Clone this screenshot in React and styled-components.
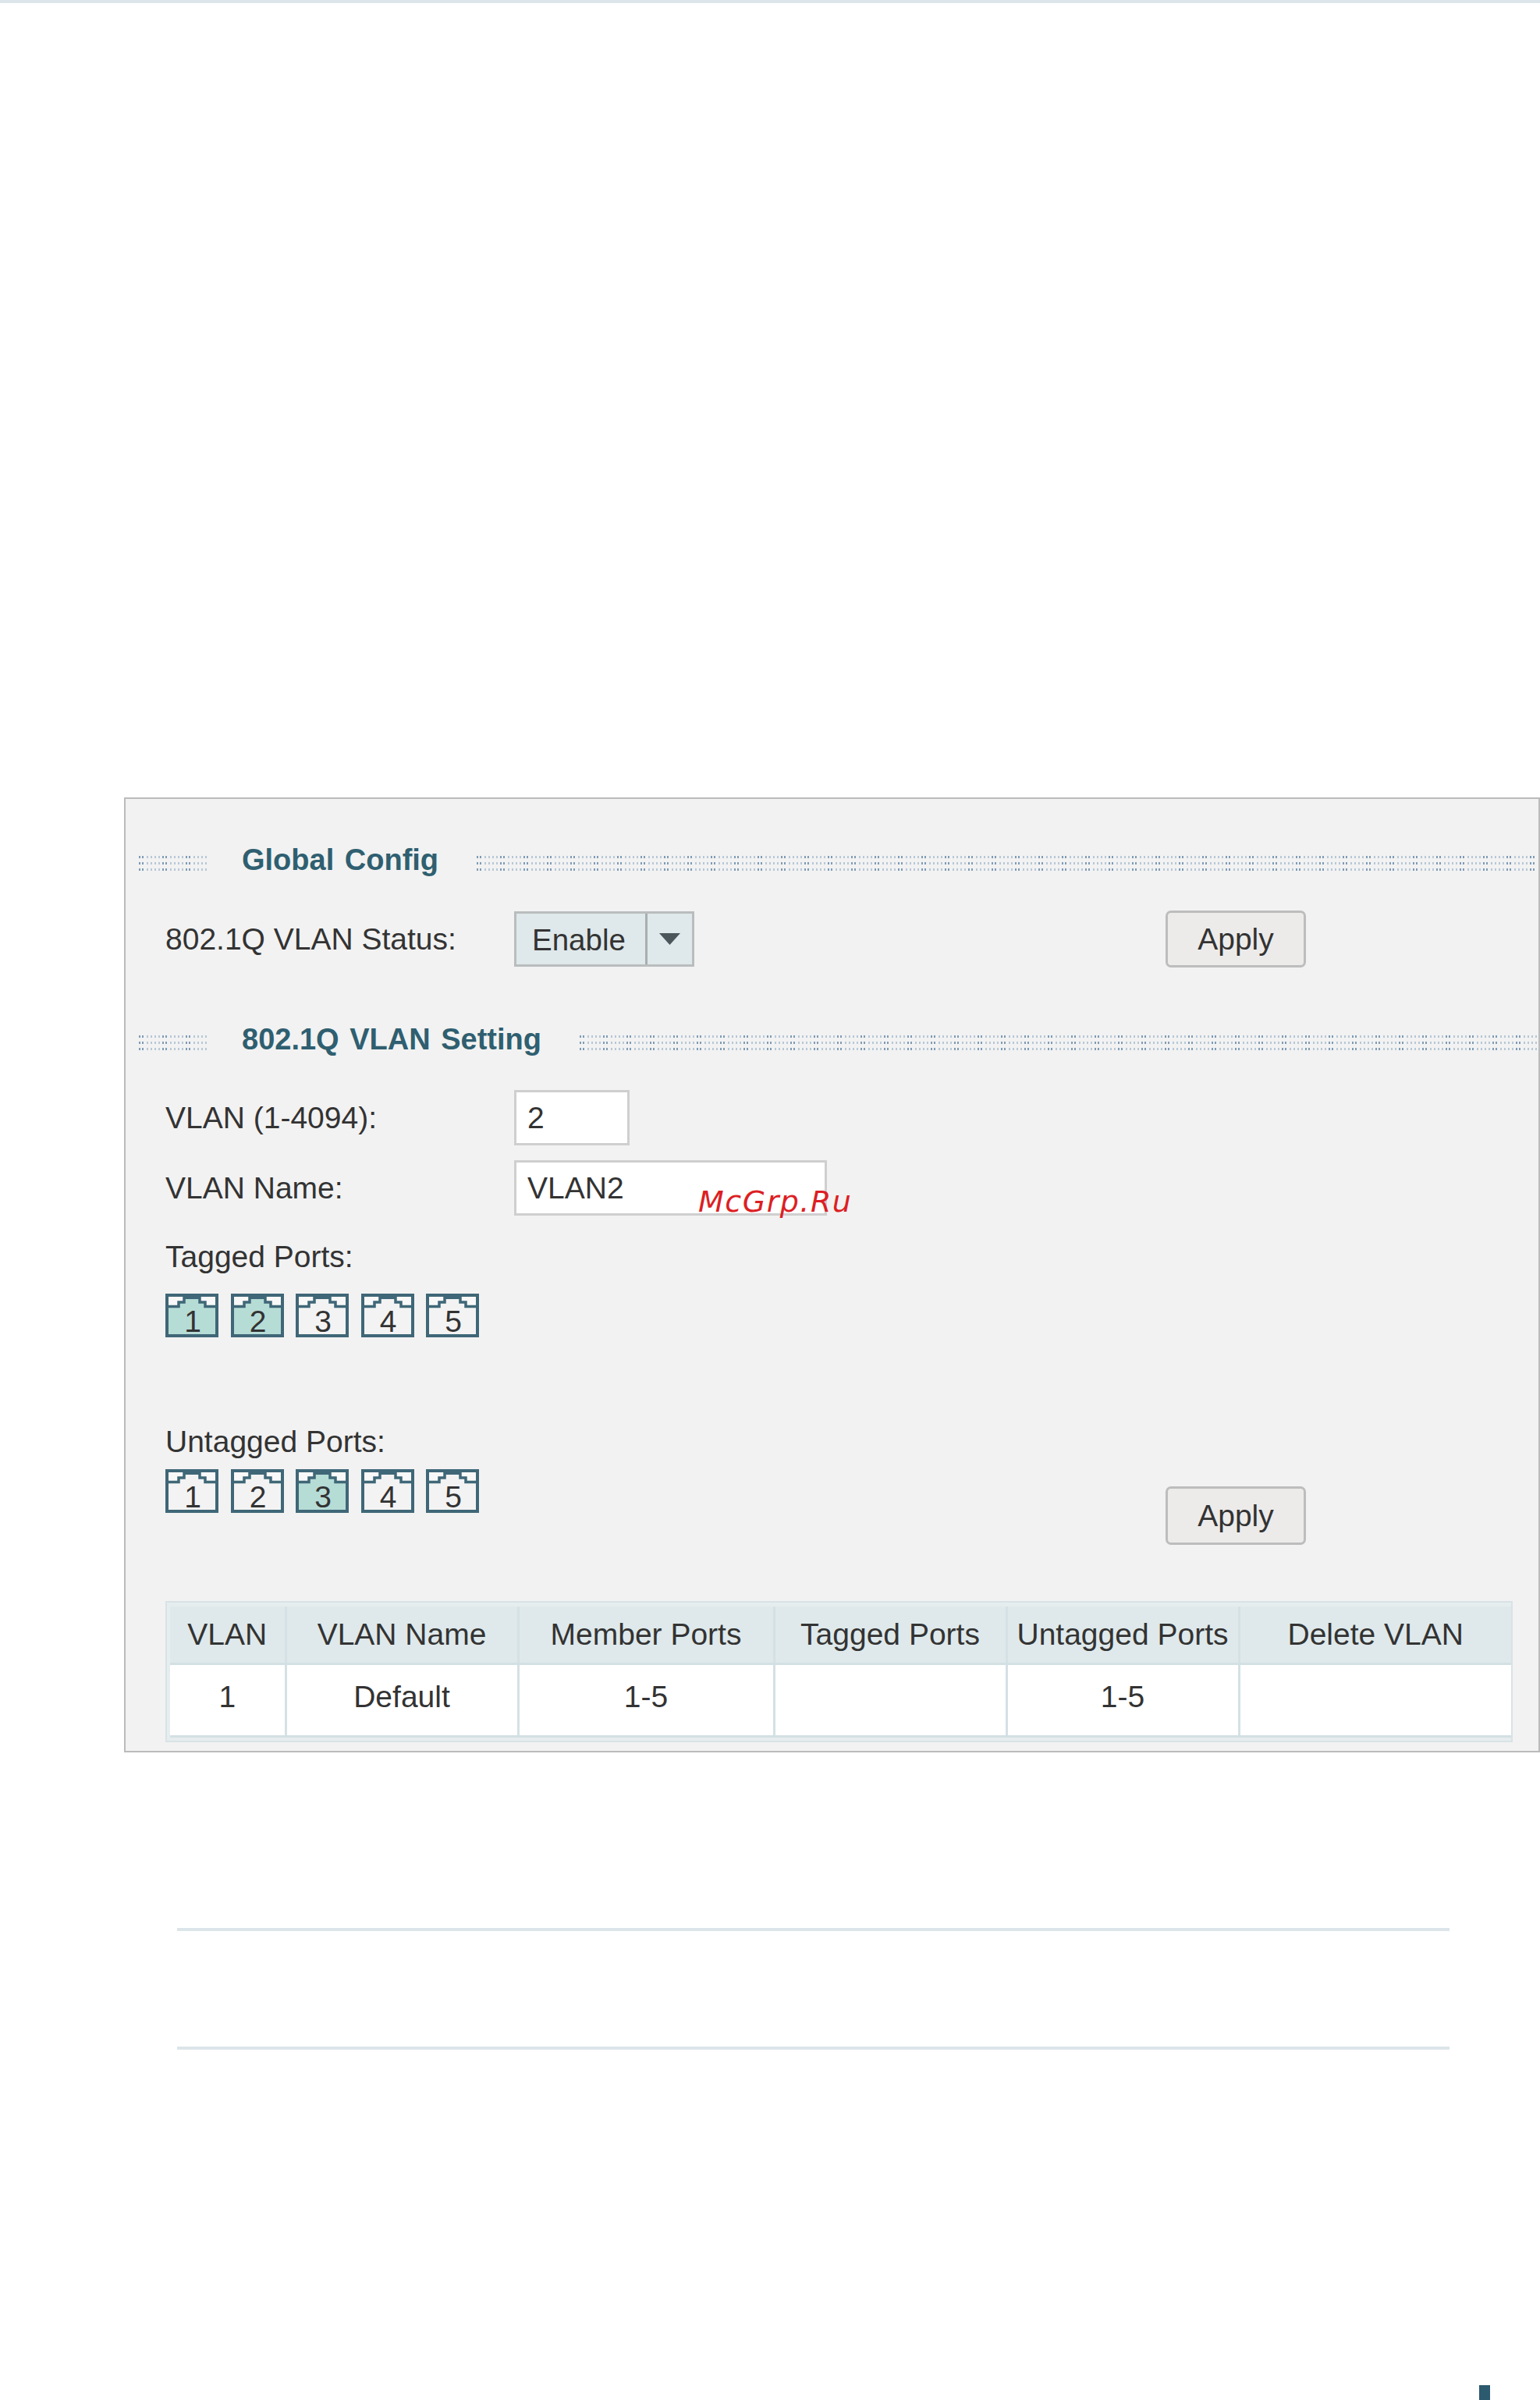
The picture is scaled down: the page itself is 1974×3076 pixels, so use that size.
import React from 'react';
import styled, { createGlobalStyle } from 'styled-components';

const GlobalStyle = createGlobalStyle`
  html, body {
    margin: 0;
    padding: 0;
    background: #fff;
    font-family: "Liberation Sans", Arial, sans-serif;
    color: #333;
  }
`;

const columns = [
  { title: 'VLAN', width: 148, value: '1' },
  { title: 'VLAN Name', width: 298, value: 'Default' },
  { title: 'Member Ports', width: 328, value: '1-5' },
  { title: 'Tagged Ports', width: 298, value: '' },
  { title: 'Untagged Ports', width: 298, value: '1-5' },
  { title: 'Delete VLAN', width: 349, value: '' },
];

const PortIcon = ({ number, selected }) => (
  <Port>
    <svg width="68" height="56" viewBox="0 0 68 56">
      <rect x="2" y="2" width="64" height="52" fill={selected ? '#b6dcd6' : '#f3f3f3'} stroke="#3f6777" strokeWidth="4" />
      <path d="M4 15V4H24V10H17V15ZM64 15V4H44V10H51V15Z" fill="#f8f8f8" />
      <path d="M2 16.5H17V11H24V5H44V11H51V16.5H66" fill="none" stroke="#3f6777" strokeWidth="3.5" />
      <rect x="24" y="2" width="20" height="5" fill="#3f6777" />
    </svg>
    <PortNumber>{number}</PortNumber>
  </Port>
);

const PortRow = ({ active }) => (
  <Ports>
    {[1, 2, 3, 4, 5].map(n => (
      <PortIcon key={n} number={n} selected={active.includes(n)} />
    ))}
  </Ports>
);

const SectionTitle = ({ children, first }) => (
  <TitleRow $first={first}>
    <Dots $width="88px" />
    <TitleText>{children}</TitleText>
    <Dots $grow />
  </TitleRow>
);

export default function App() {
  return (
    <Page>
      <GlobalStyle />
      <TopBar />
      <Panel>
        <SectionTitle first>Global Config</SectionTitle>
        <Body>
          <StatusRow>
            <Label>802.1Q VLAN Status:</Label>
            <Select>
              <SelectValue>Enable</SelectValue>
              <SelectArrow>
                <svg width="27" height="15" viewBox="0 0 27 15">
                  <path d="M0 0H27L13.5 15Z" fill="#4b565b" />
                </svg>
              </SelectArrow>
            </Select>
            <ApplyButton>Apply</ApplyButton>
          </StatusRow>
        </Body>

        <SectionTitle>802.1Q VLAN Setting</SectionTitle>
        <Body>
          <FieldRow>
            <Label>VLAN (1-4094):</Label>
            <TextInput $width="148px" defaultValue="2" readOnly />
          </FieldRow>
          <FieldRow $second>
            <Label>VLAN Name:</Label>
            <TextInput $width="401px" defaultValue="VLAN2" readOnly />
            <Watermark>McGrp.Ru</Watermark>
          </FieldRow>

          <TaggedLabel>Tagged Ports:</TaggedLabel>
          <TaggedPorts>
            <PortRow active={[1, 2]} />
          </TaggedPorts>

          <UntaggedRow>
            <UntaggedColumn>
              <Label>Untagged Ports:</Label>
              <UntaggedPorts>
                <PortRow active={[3]} />
              </UntaggedPorts>
            </UntaggedColumn>
            <LowerApply>Apply</LowerApply>
          </UntaggedRow>

          <TableFrame>
            <VlanTable>
              <colgroup>
                {columns.map(col => <col key={col.title} style={{ width: col.width }} />)}
              </colgroup>
              <thead>
                <tr>
                  {columns.map(col => <HeadCell key={col.title}>{col.title}</HeadCell>)}
                </tr>
              </thead>
              <tbody>
                <tr>
                  {columns.map(col => <BodyCell key={col.title}>{col.value}</BodyCell>)}
                </tr>
              </tbody>
            </VlanTable>
          </TableFrame>
        </Body>
      </Panel>
      <NoteBox />
      <Footer>
        <PageMark />
      </Footer>
    </Page>
  );
}

const Page = styled.div`
  width: 1974px;
  height: 3076px;
  display: flex;
  flex-direction: column;
  overflow: hidden;
`;

const TopBar = styled.div`
  height: 4px;
  background: #dce5ea;
`;

const Panel = styled.section`
  box-sizing: border-box;
  margin: 1018px 0 0 159px;
  height: 1224px;
  border: 2px solid #bbbbbb;
  background: #f2f2f2;
`;

const TitleRow = styled.div`
  display: flex;
  align-items: flex-start;
  height: 40px;
  margin: ${({ $first }) => ($first ? '56px' : '70px')} 2px 0 17px;
`;

const Dots = styled.div`
  flex: ${({ $grow }) => ($grow ? '1' : 'none')};
  width: ${({ $width }) => $width || 'auto'};
  height: 19px;
  margin-top: 17px;
  background-image:
    repeating-linear-gradient(90deg, #7f9cb6 0 2px, transparent 2px 4px, #7f9cb6 4px 6px, transparent 6px 10px,
      #b7c8d6 10px 12px, transparent 12px 15px, #b7c8d6 15px 17px, transparent 17px 20px,
      #b7c8d6 20px 22px, transparent 22px 25px, #b7c8d6 25px 27px, transparent 27px 30px);
  -webkit-mask-image: repeating-linear-gradient(180deg, #000 0 3px, transparent 3px 8px);
  mask-image: repeating-linear-gradient(180deg, #000 0 3px, transparent 3px 8px);
`;

const TitleText = styled.h2`
  margin: 2px 49px 0 44px;
  font-size: 38px;
  line-height: 40px;
  font-weight: bold;
  color: #2f5f70;
  white-space: pre;
  word-spacing: 3px;
`;

const Body = styled.div`
  padding-left: 51px;
`;

const Label = styled.div`
  font-size: 39px;
  line-height: 44px;
  color: #333;
  white-space: nowrap;
`;

const StatusRow = styled.div`
  display: flex;
  align-items: center;
  height: 73px;
  margin-top: 47px;

  ${Label} {
    width: 447px;
  }
`;

const Select = styled.div`
  box-sizing: border-box;
  display: flex;
  width: 231px;
  height: 71px;
  border: 3px solid #b9bdbd;
  background: #dfe8ea;
`;

const SelectValue = styled.div`
  box-sizing: border-box;
  width: 168px;
  padding-left: 20px;
  border-right: 3px solid #a9afaf;
  font-size: 38.5px;
  line-height: 67px;
`;

const SelectArrow = styled.div`
  flex: 1;
  display: flex;
  align-items: center;
  justify-content: center;
`;

const ApplyButton = styled.button`
  box-sizing: border-box;
  width: 180px;
  height: 73px;
  margin-left: 604px;
  padding: 0;
  border: 3px solid #bdbdbd;
  border-radius: 7px;
  background: #ecebea;
  font-family: inherit;
  font-size: 39px;
  color: #333;
`;

const LowerApply = styled(ApplyButton)`
  flex: none;
  height: 75px;
  margin: 79px 0 0;
`;

const FieldRow = styled.div`
  position: relative;
  display: flex;
  align-items: center;
  height: 71px;
  margin-top: ${({ $second }) => ($second ? '19px' : '47px')};

  ${Label} {
    width: 447px;
  }
`;

const TextInput = styled.input`
  box-sizing: border-box;
  width: ${({ $width }) => $width};
  height: 71px;
  padding: 0 0 0 14px;
  border: 3px solid #cfcfcf;
  border-radius: 0;
  outline: none;
  background: #fff;
  font-family: inherit;
  font-size: 39px;
  color: #333;
`;

const Watermark = styled.span`
  position: absolute;
  left: 683px;
  top: 31px;
  font-family: "DejaVu Sans", sans-serif;
  font-style: italic;
  font-size: 38px;
  line-height: 44px;
  letter-spacing: 1.5px;
  color: #dc1f24;
`;

const TaggedLabel = styled(Label)`
  margin-top: 31px;
`;

const TaggedPorts = styled.div`
  margin-top: 25px;
`;

const Ports = styled.div`
  display: flex;
  gap: 15.5px;
`;

const Port = styled.div`
  position: relative;
  flex: none;
  width: 68px;
  height: 56px;

  svg {
    display: block;
  }
`;

const PortNumber = styled.span`
  position: absolute;
  left: 2px;
  right: 0;
  top: 21px;
  font-size: 39px;
  line-height: 30px;
  text-align: center;
  color: #333;
`;

const UntaggedRow = styled.div`
  display: flex;
  align-items: flex-start;
  margin-top: 112px;
`;

const UntaggedColumn = styled.div`
  width: 1282px;
`;

const UntaggedPorts = styled.div`
  margin-top: 13px;
`;

const TableFrame = styled.div`
  box-sizing: border-box;
  width: 1727px;
  height: 181px;
  margin-top: 72px;
  padding: 5px 2px 7px 4px;
  border: 2px solid #d8e3e6;
  background: #e6edef;
`;

const VlanTable = styled.table`
  width: 1717px;
  table-layout: fixed;
  border-collapse: collapse;
`;

const HeadCell = styled.th`
  box-sizing: border-box;
  height: 73px;
  padding: 0;
  border-left: 3px solid #d5e1e4;
  border-bottom: 3px solid #d3e0e3;
  background: #dfe9eb;
  font-size: 39px;
  font-weight: normal;
  color: #333;
  white-space: nowrap;

  &:first-child {
    border-left: none;
  }
`;

const BodyCell = styled.td`
  box-sizing: border-box;
  height: 93px;
  padding: 0 0 8px;
  border-left: 3px solid #d5e1e4;
  border-bottom: 3px solid #d3e0e3;
  background: #fff;
  font-size: 39px;
  text-align: center;
  color: #333;

  &:first-child {
    border-left: none;
  }
`;

const NoteBox = styled.div`
  box-sizing: border-box;
  width: 1631px;
  height: 156px;
  margin: 225px 0 0 227px;
  border-top: 4px solid #dce5e9;
  border-bottom: 4px solid #dce5e9;
`;

const Footer = styled.footer`
  display: flex;
  justify-content: flex-end;
  margin-top: auto;
  padding-right: 64px;
`;

const PageMark = styled.div`
  width: 14px;
  height: 19px;
  background: #2c5a6e;
`;
